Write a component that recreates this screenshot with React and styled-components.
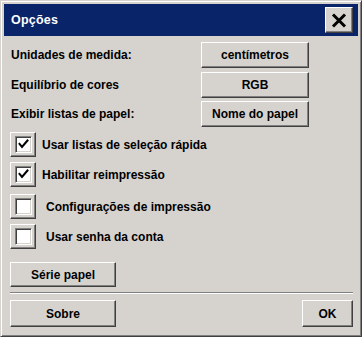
import React from "react";
import styled, { createGlobalStyle } from "styled-components";

const Global = createGlobalStyle`
  html, body { margin: 0; padding: 0; background: #d6d3ce; }
  body { font-family: "Liberation Sans", Arial, sans-serif; }
`;

const Dialog = styled.div`
  box-sizing: border-box;
  width: 362px;
  height: 337px;
  background: #d6d3ce;
  border: 1px solid;
  border-color: #d6d3ce #404040 #404040 #d6d3ce;
  box-shadow: inset 1px 1px 0 #ffffff, inset -1px -1px 0 #808080;
  display: flex;
  flex-direction: column;
  padding: 3px;
`;

const TitleBar = styled.div`
  height: 32px;
  background: #0a246a;
  display: flex;
  align-items: center;
  justify-content: space-between;
  padding: 0 5px 0 7px;
  flex-shrink: 0;
`;

const Title = styled.span`
  color: #ffffff;
  font-weight: bold;
  font-size: 12.5px;
  letter-spacing: 0.2px;
`;

const raised = `
  background: #d6d3ce;
  border: 1px solid;
  border-color: #ffffff #404040 #404040 #ffffff;
  box-shadow: inset -1px -1px 0 #808080;
  box-sizing: border-box;
`;

const CloseButton = styled.div`
  ${raised}
  width: 28px;
  height: 26px;
  display: flex;
  align-items: center;
  justify-content: center;
`;

const Body = styled.div`
  flex: 1;
  display: flex;
  flex-direction: column;
  padding: 6px 5px 6px 6px;
`;

const Grid = styled.div`
  display: grid;
  grid-template-columns: 191px 108px;
  grid-auto-rows: 26px;
  row-gap: 3.5px;
  align-items: center;
`;

const Label = styled.span`
  font-weight: bold;
  font-size: 12px;
  color: #000;
  padding-left: 1px;
`;

const Button = styled.div`
  ${raised}
  width: ${(p) => p.$w || 108}px;
  height: ${(p) => p.$h || 26}px;
  margin-top: ${(p) => p.$mt || 0}px;
  display: flex;
  align-items: center;
  justify-content: center;
  font-weight: bold;
  font-size: 12px;
  color: #000;
`;

const Checks = styled.div`
  display: flex;
  flex-direction: column;
  margin-top: 5px;
`;

const CheckRow = styled.div`
  display: flex;
  align-items: center;
  height: 25px;
  margin-top: ${(p) => p.$mt}px;
  gap: ${(p) => p.$gap}px;
`;

const CheckFrame = styled.div`
  ${raised}
  width: 26px;
  height: 25px;
  display: flex;
  align-items: center;
  justify-content: center;
`;

const CheckBox = styled.div`
  box-sizing: border-box;
  width: 17px;
  height: 17px;
  background: #ffffff;
  border: 1px solid;
  border-color: #808080 #ffffff #ffffff #808080;
  box-shadow: inset 1px 1px 0 #404040, inset -1px -1px 0 #d6d3ce;
  display: flex;
  align-items: center;
  justify-content: center;
`;

const Separator = styled.div`
  height: 0;
  border-top: 1px solid #808080;
  border-bottom: 1px solid #ffffff;
  margin: 5px 0 6px 0;
`;

const Footer = styled.div`
  display: flex;
  justify-content: space-between;
  align-items: center;
`;

const Check = () => (
  <svg width="11" height="11" viewBox="0 0 11 11">
    <path d="M1.5 5 L4 8 L9.5 1.5" stroke="#000" strokeWidth="2" fill="none" strokeLinecap="square" />
  </svg>
);

const Option = ({ checked, text, mt, gap }) => (
  <CheckRow $mt={mt} $gap={gap}>
    <CheckFrame>
      <CheckBox>{checked && <Check />}</CheckBox>
    </CheckFrame>
    <Label>{text}</Label>
  </CheckRow>
);

export default function App() {
  return (
    <>
      <Global />
      <Dialog>
        <TitleBar>
          <Title>Opções</Title>
          <CloseButton>
            <svg width="16" height="15" viewBox="0 0 16 15">
              <path d="M2 1.5 L14 13.5 M14 1.5 L2 13.5" stroke="#000" strokeWidth="3" strokeLinecap="butt" />
            </svg>
          </CloseButton>
        </TitleBar>
        <Body>
          <Grid>
            <Label>Unidades de medida:</Label>
            <Button>centímetros</Button>
            <Label>Equilíbrio de cores</Label>
            <Button>RGB</Button>
            <Label>Exibir listas de papel:</Label>
            <Button>Nome do papel</Button>
          </Grid>
          <Checks>
            <Option checked text="Usar listas de seleção rápida" mt={0} gap={5} />
            <Option checked text="Habilitar reimpressão" mt={5} gap={5} />
            <Option text="Configurações de impressão" mt={7} gap={9} />
            <Option text="Usar senha da conta" mt={5} gap={9} />
          </Checks>
          <Button $w={106} $h={25} $mt={13}>Série papel</Button>
          <Separator />
          <Footer>
            <Button $w={106} $h={27}>Sobre</Button>
            <Button $w={51} $h={27}>OK</Button>
          </Footer>
        </Body>
      </Dialog>
    </>
  );
}
